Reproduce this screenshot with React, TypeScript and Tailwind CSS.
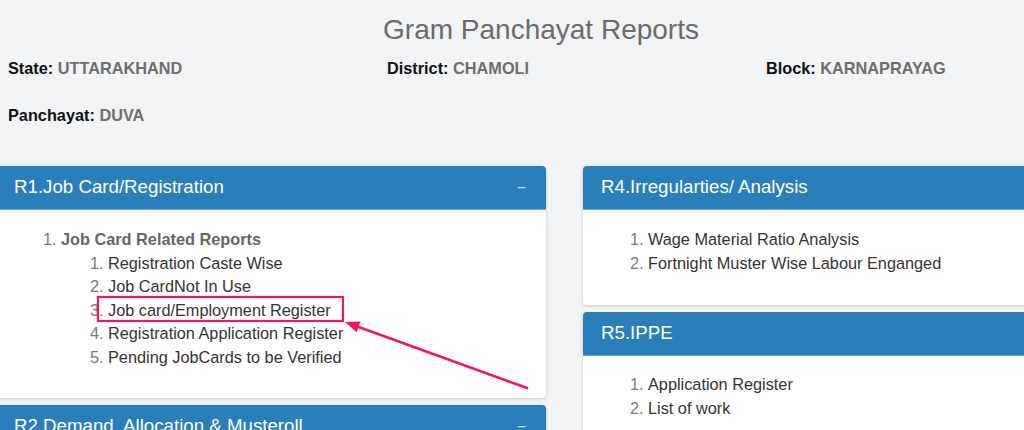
import React from 'react';

type Item = { label: string; children?: string[] };

const r1: Item[] = [
  {
    label: 'Job Card Related Reports',
    children: [
      'Registration Caste Wise',
      'Job CardNot In Use',
      'Job card/Employment Register',
      'Registration Application Register',
      'Pending JobCards to be Verified',
    ],
  },
];

const r4 = ['Wage Material Ratio Analysis', 'Fortnight Muster Wise Labour Enganged'];
const r5 = ['Application Register', 'List of work'];

const PanelHeader: React.FC<{ title: string; collapse?: boolean }> = ({ title, collapse }) => (
  <div className="h-[44px] flex items-center justify-between bg-[#2a7fba] border-b border-[#6aa6d2] rounded-t-[4px] pl-[18px] pr-[20px]">
    <span className="text-white text-[18.7px] leading-none">{title}</span>
    {collapse && <span className="text-[#d6e6f3] text-[16px] leading-none">−</span>}
  </div>
);

const Panel: React.FC<{ title: string; collapse?: boolean; bodyClass: string; children?: React.ReactNode }> = ({
  title,
  collapse,
  bodyClass,
  children,
}) => (
  <div className="bg-white rounded-[4px] shadow-[0_1px_3px_rgba(0,0,0,0.18)]">
    <PanelHeader title={title} collapse={collapse} />
    <div className={bodyClass}>{children}</div>
  </div>
);

const InfoField: React.FC<{ label: string; value: string }> = ({ label, value }) => (
  <p className="text-[16.3px] leading-[20px] font-bold text-[#111]">
    {label}: <span className="text-[#6e6e6e]">{value}</span>
  </p>
);

export default function App() {
  return (
    <div className="w-[1024px] h-[430px] overflow-hidden bg-[#f2f3f5] font-['Liberation_Sans',Arial,sans-serif]">
      <div className="relative w-[1145px]">
        <h1 className="w-[1082px] pt-[13px] text-center text-[28px] leading-[34px] text-[#6b6b6b]">Gram Panchayat Reports</h1>

        <div className="grid grid-cols-[379px_379px_379px] mt-[11px] pl-[8px]">
          <InfoField label="State" value="UTTARAKHAND" />
          <InfoField label="District" value="CHAMOLI" />
          <InfoField label="Block" value="KARNAPRAYAG" />
        </div>
        <div className="mt-[27px] pl-[8px]">
          <InfoField label="Panchayat" value="DUVA" />
        </div>

        <div className="grid grid-cols-[550px_546px] gap-x-[37px] mt-[41px] -ml-[4px] items-start">
          <div className="flex flex-col gap-[7px]">
            <Panel title="R1.Job Card/Registration" collapse bodyClass="pt-[18px] pb-[29px]">
              <ol className="list-decimal pl-[65px] text-[16.3px] leading-[23.5px] marker:text-[#7a7a7a]">
                {r1.map(item => (
                  <li key={item.label}>
                    <span className="font-bold text-[#666]">{item.label}</span>
                    <ol className="list-decimal pl-[47px] text-[#333]">
                      {item.children?.map(c => (
                        <li key={c}>{c}</li>
                      ))}
                    </ol>
                  </li>
                ))}
              </ol>
            </Panel>
            <Panel title="R2.Demand, Allocation & Musteroll" collapse bodyClass="h-[80px]" />
          </div>

          <div className="flex flex-col gap-[7px]">
            <Panel title="R4.Irregularties/ Analysis" bodyClass="pt-[18px] pb-[30px]">
              <ol className="list-decimal pl-[65px] text-[16.3px] leading-[23.5px] text-[#333] marker:text-[#7a7a7a]">
                {r4.map(t => (
                  <li key={t}>{t}</li>
                ))}
              </ol>
            </Panel>
            <Panel title="R5.IPPE" bodyClass="pt-[17px] pb-[30px]">
              <ol className="list-decimal pl-[65px] text-[16.3px] leading-[23.5px] text-[#333] marker:text-[#7a7a7a]">
                {r5.map(t => (
                  <li key={t}>{t}</li>
                ))}
              </ol>
            </Panel>
          </div>
        </div>

        {/* annotation: highlight box and arrow */}
        <svg className="absolute left-0 top-0 pointer-events-none" width="1024" height="430" viewBox="0 0 1024 430">
          <rect x="98" y="297" width="245" height="24" fill="none" stroke="#f2175b" strokeWidth="2.2" />
          <line x1="527" y1="388" x2="356" y2="326" stroke="#f2175b" strokeWidth="2.5" strokeLinecap="round" />
          <polygon points="345,322 360.5,321.6 356.6,332.2" fill="#f2175b" />
        </svg>
      </div>
    </div>
  );
}
